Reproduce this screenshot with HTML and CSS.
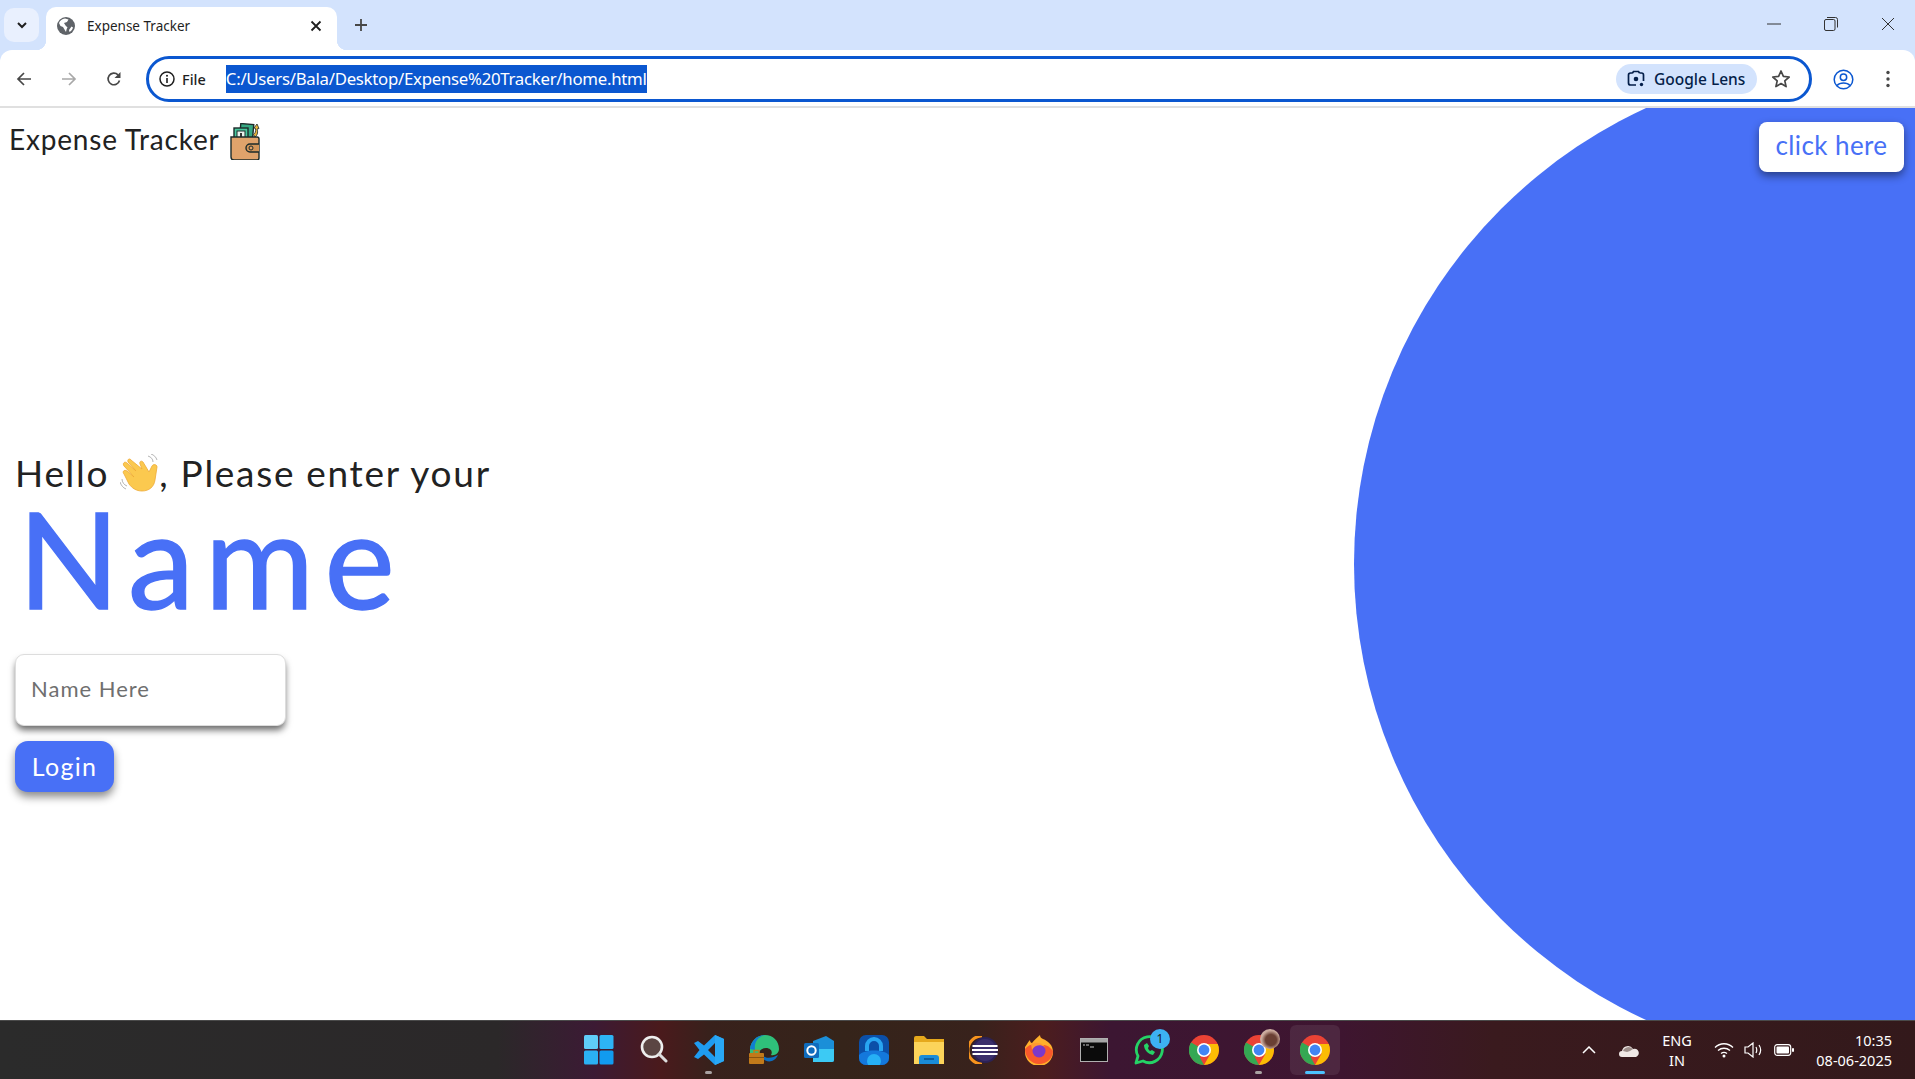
FILE: index.html
```html
<!DOCTYPE html>
<html lang="en">
<head>
<meta charset="utf-8">
<title>Expense Tracker</title>
<link rel="stylesheet" href="styles.css">
</head>
<body>
<div class="window">
  <div class="tabstrip">
    <div class="tabsearch"><svg width="14" height="14" viewBox="0 0 14 14"><path d="M3 5l4 4 4-4" fill="none" stroke="#1f1f1f" stroke-width="2"/></svg></div>
    <div class="tab">
      <svg class="favicon" width="18" height="18" viewBox="0 0 18 18"><circle cx="9" cy="9" r="9" fill="#5f6368"/><path d="M8 1.500C5 2 3 3.500 2 6l1.500 3L6 10l1.500 2.500L9 15c.5-2 .5-3 1.500-4.500L8.500 8.500 7 6l3-1 1.500-2.500zM12 13l2.500-3.500 1.500 1c-.5 2-2 3.500-3.500 4.500z" fill="#fff"/></svg>
      <span class="tabtitle">Expense Tracker</span>
      <svg class="tabclose" width="12" height="12" viewBox="0 0 12 12"><path d="M1.500 1.500l9 9M10.500 1.500l-9 9" stroke="#1f1f1f" stroke-width="1.800"/></svg>
    </div>
    <svg class="newtab" width="14" height="14" viewBox="0 0 14 14"><path d="M7 1v12M1 7h12" stroke="#474747" stroke-width="1.800"/></svg>
    <div class="wincontrols">
      <svg width="14" height="14" viewBox="0 0 14 14"><path d="M0 7h14" stroke="#333" stroke-width="1"/></svg>
      <svg width="14" height="14" viewBox="0 0 14 14"><rect x=".5" y="2.500" width="10.500" height="11" rx="1.500" fill="none" stroke="#333"/><path d="M3 .5H11.500a2 2 0 0 1 2 2v8" fill="none" stroke="#333"/></svg>
      <svg width="14" height="14" viewBox="0 0 14 14"><path d="M1 1l12 12M13 1L1 13" stroke="#333" stroke-width="1"/></svg>
    </div>
  </div>
  <div class="toolbar">
    <svg class="navicon" width="16" height="16" viewBox="0 0 16 16"><path d="M15 8H2M8 2 2 8l6 6" fill="none" stroke="#474747" stroke-width="1.700"/></svg>
    <svg class="navicon" width="16" height="16" viewBox="0 0 16 16"><path d="M1 8h13M8 2l6 6-6 6" fill="none" stroke="#a8a8a8" stroke-width="1.700"/></svg>
    <svg class="navicon" width="16" height="16" viewBox="0 0 16 16"><path d="M13.500 9.500A5.800 5.800 0 1 1 12 3.800" fill="none" stroke="#474747" stroke-width="1.700"/><path d="M14.500 1v6h-6z" fill="#474747"/></svg>
    <div class="omnibox">
      <svg class="infoicon" width="16" height="16" viewBox="0 0 16 16"><circle cx="8" cy="8" r="7" fill="none" stroke="#1f1f1f" stroke-width="1.500"/><path d="M8 7v5" stroke="#1f1f1f" stroke-width="1.600"/><circle cx="8" cy="4.700" r="1" fill="#1f1f1f"/></svg>
      <span class="filelabel">File</span>
      <span class="url">C:/Users/Bala/Desktop/Expense%20Tracker/home.html</span>
      <div class="lens">
        <svg width="18" height="18" viewBox="0 0 18 18"><path d="M5.500 3H3.500A2 2 0 0 0 1.500 5v8a2 2 0 0 0 2 2H9M12.500 3h2a2 2 0 0 1 2 2v6M5.500 3l1-1.500h5l1 1.500" fill="none" stroke="#041e49" stroke-width="1.700"/><circle cx="9" cy="9" r="2.300" fill="#041e49"/><circle cx="14.500" cy="14.500" r="1.700" fill="#041e49"/></svg>
        <span>Google Lens</span>
      </div>
      <svg class="star" width="20" height="20" viewBox="0 0 20 20"><path d="M10 2l2.400 5.400 5.800.6-4.400 3.900 1.300 5.700L10 14.600l-5.100 3 1.300-5.700L1.800 8l5.800-.6z" fill="none" stroke="#474747" stroke-width="1.700" stroke-linejoin="round"/></svg>
    </div>
    <svg class="profile" width="21" height="21" viewBox="0 0 21 21"><circle cx="10.500" cy="10.500" r="9.300" fill="none" stroke="#0b57d0" stroke-width="1.500"/><circle cx="10.500" cy="8.300" r="3.200" fill="none" stroke="#0b57d0" stroke-width="1.500"/><path d="M4 16.500c3-3.400 10-3.400 13 0" fill="none" stroke="#0b57d0" stroke-width="1.500"/></svg>
    <svg class="kebab" width="4" height="18" viewBox="0 0 4 18"><circle cx="2" cy="2.500" r="1.700" fill="#474747"/><circle cx="2" cy="9" r="1.700" fill="#474747"/><circle cx="2" cy="15.500" r="1.700" fill="#474747"/></svg>
  </div>
  <main class="page">
    <div class="circle"></div>
    <header class="pagehead">
      <div class="brand">
        <span class="brandtext">Expense Tracker</span>
        <svg width="33" height="37" viewBox="0 0 33 37"><rect x="11" y="1" width="13" height="18" fill="#35a882" stroke="#1c2b2a" stroke-width="1.400" transform="rotate(5 17 10)"/><rect x="5" y="5" width="14" height="17" fill="#48c79c" stroke="#1c2b2a" stroke-width="1.400"/><rect x="8" y="8" width="8" height="10" fill="#eaf2ec" stroke="#1c2b2a"/><path d="M11 10h2v6h-2z" fill="#333"/><path d="M26 14c3-2 3-6 2-8l2-.5L28 1l-3 4 1.500.5c.5 3-.5 5-2 6z" fill="#e8b23a" stroke="#1c2b2a" stroke-width=".8"/><path d="M2 14h26a2 2 0 0 1 2 2v19a2 2 0 0 1-2 2H5a3 3 0 0 1-3-3z" fill="#e0a36b" stroke="#1c2b2a" stroke-width="1.400"/><path d="M30 21H21a4 4 0 0 0 0 8h9" fill="#d39558" stroke="#1c2b2a" stroke-width="1.400"/><circle cx="22" cy="25" r="2" fill="#e0a36b" stroke="#1c2b2a"/></svg>
      </div>
      <button class="clickhere">click here</button>
    </header>
    <section class="login">
      <p class="hello">Hello <svg class="wave" width="41" height="38" viewBox="0 0 41 38"><path d="M11 6l11 9-2-5c-1-2 1-4 3-2l6 10 3-6c1-2 5-2 5 1l-2 13c-1 7-6 11-13 11-6 0-10-3-13-7L4 20c-2-2 0-5 3-3l7 6L4 12c-2-3 1-5 3-3l9 8L8 8c-1-3 2-4 3-2z" fill="#fbc94f" stroke="#eeaa36" stroke-width=".8"/><path d="M28 2c3 1 5 3 5 6M31 0c3 1 5 3 6 6M2 25c0 3 2 6 5 7M0 28c1 3 3 6 6 7" fill="none" stroke="#b5b5b5" stroke-width="1"/></svg>, Please enter your</p>
      <h1 class="name">Name</h1>
      <input class="nameinput" type="text" placeholder="Name Here">
      <button class="loginbtn">Login</button>
    </section>
  </main>
  <footer class="taskbar">
    <div class="taskicons">
      <div class="ticon"><svg width="30" height="30" viewBox="0 0 30 30"><rect x="0" y="0" width="14" height="14" rx="1.500" fill="#5fcdf8"/><rect x="15.500" y="0" width="14" height="14" rx="1.500" fill="#2db4f5"/><rect x="0" y="15.500" width="14" height="14" rx="1.500" fill="#2bb0f3"/><rect x="15.500" y="15.500" width="14" height="14" rx="1.500" fill="#119bf0"/></svg></div>
      <div class="ticon"><svg width="28" height="30" viewBox="0 0 28 30"><circle cx="12" cy="12" r="10" fill="#5b4543" stroke="#eee" stroke-width="2.600"/><path d="M19 19l7 7" stroke="#ddd" stroke-width="3" stroke-linecap="round"/></svg></div>
      <div class="ticon dot"><svg width="30" height="30" viewBox="0 0 30 30"><path d="M21 0l9 4v22l-9 4-11-10.500-6 4.500L0 22l5.500-7L0 8l4-2 6 4.500zM21 8l-7 7 7 7z" fill="#1f9cf0"/><path d="M21 0l9 4v22l-9 4z" fill="#29a8f5"/></svg></div>
      <div class="ticon"><svg width="30" height="30" viewBox="0 0 30 30"><path d="M1 14C2 5 9 0 16 0c8 0 14 6 14 14 0 4-4 7-8 6 2-3 0-7-5-7-6 0-8 5-7 9H1z" fill="#2fc07a"/><path d="M1 14C2 5 9 0 16 0 8 2 5 8 6 15z" fill="#0f7fd0"/><path d="M11 20c4 8 14 9 18 0-4 2-9 4-13 2z" fill="#0d6ec0"/><rect y="18" width="15" height="11" rx="1" fill="#c27a1a"/><rect x="5" y="15.500" width="5" height="3" fill="none" stroke="#c27a1a" stroke-width="1.500"/><rect y="22" width="15" height="1" fill="#8a5410"/></svg></div>
      <div class="ticon"><svg width="30" height="30" viewBox="0 0 30 30"><path d="M9 6l13-5 8 5v19a2 2 0 0 1-2 2H9z" fill="#1b8fd8"/><path d="M9 14h21v11a2 2 0 0 1-2 2H9z" fill="#3ccaf4"/><rect y="8" width="15" height="15" rx="1.500" fill="#0f6cbd"/><circle cx="7.500" cy="15.500" r="4.200" fill="none" stroke="#fff" stroke-width="2"/></svg></div>
      <div class="ticon"><svg width="30" height="30" viewBox="0 0 30 30"><rect width="30" height="30" rx="7" fill="#0b4fa8"/><path d="M8 16v-5a7 7 0 0 1 14 0v5" fill="none" stroke="#28a5f2" stroke-width="4"/><path d="M0 20c5-6 25-6 30 0v3a7 7 0 0 1-7 7H7a7 7 0 0 1-7-7z" fill="#1478dc"/><circle cx="15" cy="26" r="7" fill="#26b0f5"/></svg></div>
      <div class="ticon"><svg width="30" height="28" viewBox="0 0 30 28"><path d="M0 2a2 2 0 0 1 2-2h8l3 3h17v25H0z" fill="#e6a91c"/><path d="M0 6h30v22H0z" fill="#fcd45a"/><path d="M5 22a3 3 0 0 1 3-3h14a3 3 0 0 1 3 3v6H5z" fill="#1a8cd8"/><path d="M10 23h10" stroke="#0b4f8a" stroke-width="1.500"/></svg></div>
      <div class="ticon"><svg width="30" height="28" viewBox="0 0 30 28"><path d="M13 0a14 14 0 0 0 0 28" fill="none" stroke="#f7941e" stroke-width="3"/><circle cx="16" cy="14" r="13" fill="#2c2255"/><circle cx="16" cy="14" r="11" fill="#3a2f6b"/><path d="M3.500 10h25M3 14h26M3.500 18h25" stroke="#fff" stroke-width="2"/></svg></div>
      <div class="ticon"><svg width="30" height="30" viewBox="0 0 30 30"><path d="M1 12c2-3 3-5 5-7 0 2 1 3 2 3 2-3 5-5 8-8 0 2 1 3 3 4 5 2 10 6 10 13a14 14 0 0 1-28 0c0-2 0-4 0-5z" fill="#ffb02c"/><path d="M1 14c0 8 6 15 14 15s14-6 14-13c-3-4-6-6-9-6l-5 1-9-1-3 2z" fill="#f8592c"/><circle cx="15" cy="16" r="6.500" fill="#7b39c9"/><path d="M7 9c4-2 11-2 14 3-3-2-7-2-9-1-2 1-3 2-4 4z" fill="#ff9a30"/></svg></div>
      <div class="ticon"><svg width="28" height="24" viewBox="0 0 28 24"><rect x=".5" y=".5" width="27" height="23" fill="#0b0b0b" stroke="#b0b0b0"/><rect x="1" y="1" width="26" height="3.500" fill="#a6a6a6"/><path d="M3 7h2M6 7h3M10 9h4" stroke="#c8c8c8"/></svg></div>
      <div class="ticon"><svg width="30" height="30" viewBox="0 0 30 30"><path d="M2 28l2-7a13 13 0 1 1 5 5z" fill="none" stroke="#25d366" stroke-width="2.800" stroke-linejoin="round"/><path d="M10 10c0 5 4 9 9 10l2-3-3-2-2 1c-1-1-2-2-2-3l1-2-2-3z" fill="#25d366"/></svg><span class="badge">1</span></div>
      <div class="ticon"><svg class="chrome" width="30" height="30" viewBox="0 0 30 30"><use href="#chromeicon"/></svg></div>
      <div class="ticon dot"><svg class="chrome" width="30" height="30" viewBox="0 0 30 30"><use href="#chromeicon"/></svg><span class="avatar"></span></div>
      <div class="ticon active"><svg class="chrome" width="30" height="30" viewBox="0 0 30 30"><use href="#chromeicon"/></svg></div>
    </div>
    <div class="tray">
      <svg width="14" height="8" viewBox="0 0 14 8"><path d="M1 7l6-6 6 6" fill="none" stroke="#fff" stroke-width="1.500"/></svg>
      <svg class="cloud" width="20" height="13" viewBox="0 0 20 13"><path d="M3 13a3 3 0 0 1 0-6 6 6 0 0 1 11-2 4 4 0 0 1 3 8z" fill="#f0e9e6"/><path d="M4 7a6 6 0 0 1 10-2l-3 2-3 1z" fill="#9c8e8a"/></svg>
      <div class="lang"><span>ENG</span><span>IN</span></div>
      <div class="sysicons">
        <svg width="20" height="16" viewBox="0 0 20 16"><path d="M1 5.500c5-5 13-5 18 0M4 8.500c3.500-3 8.500-3 12 0M7 11.500c2-1.500 4-1.500 6 0" fill="none" stroke="#fff" stroke-width="1.300"/><circle cx="10" cy="14" r="1.500" fill="#fff"/></svg>
        <svg width="20" height="16" viewBox="0 0 20 16"><path d="M1 5h3l5-4v14l-5-4H1zM12 5c1 2 1 4 0 6M15 3c2 3 2 7 0 10" fill="none" stroke="#fff" stroke-width="1.200"/></svg>
        <svg width="20" height="12" viewBox="0 0 20 12"><rect x=".7" y=".7" width="16" height="10.600" rx="2.500" fill="none" stroke="#fff" stroke-width="1.200"/><rect x="2.500" y="2.500" width="12.500" height="7" rx="1" fill="#fff"/><rect x="18" y="4" width="2" height="4" rx="1" fill="#fff"/></svg>
      </div>
      <div class="clock"><span>10:35</span><span>08-06-2025</span></div>
    </div>
  </footer>
</div>
<svg class="defs" width="0" height="0"><defs><g id="chromeicon"><circle cx="15" cy="15" r="15" fill="#ea4335"/><path d="M15 15 8.500 26.300 1.900 22.500A15 15 0 0 1 2 7.500z" fill="#34a853"/><path d="M1.900 7.700 8.500 19l6.500-4z" fill="#34a853"/><path d="M15 9h13.700a15 15 0 0 1-13.700 21L21.500 18.800z" fill="#fbbc04"/><path d="M2 22.500 8.500 18l6.500 12a15 15 0 0 1-13-7.500z" fill="#34a853"/><circle cx="15" cy="15" r="7" fill="#fff"/><circle cx="15" cy="15" r="5.400" fill="#4285f4"/></g></defs></svg>
</body>
</html>
```
FILE: styles.css
```css
* { box-sizing: border-box; }
html, body { margin: 0; padding: 0; height: 100%; overflow: hidden; background: #d3e3fd; }
body { font-family: "Lato", "Noto Sans", sans-serif; }
.defs { display: block; height: 0; }
.window { width: 1915px; height: 1079px; display: flex; flex-direction: column; overflow: hidden; background: #d3e3fd; }

.tabstrip { height: 50px; flex: none; display: flex; align-items: flex-start; padding-left: 4px; }
.tabsearch { width: 35px; height: 34px; margin-top: 8px; border-radius: 10px; background: #e9f0fe; display: flex; align-items: center; justify-content: center; }
.tab { position: relative; width: 291px; height: 43px; margin: 7px 0 0 7px; background: #fff; border-radius: 10px 10px 0 0; display: flex; align-items: center; padding: 0 15px 6px 11px; font-family: "Noto Sans", sans-serif; font-size: 13.500px; color: #1f1f1f; }
.tab::before, .tab::after { content: ""; position: absolute; bottom: 0; width: 10px; height: 10px; }
.tab::before { left: -10px; background: radial-gradient(circle at 0 0, transparent 10px, #fff 10.500px); }
.tab::after { right: -10px; background: radial-gradient(circle at 100% 0, transparent 10px, #fff 10.500px); }
.tabtitle { margin-left: 12px; flex: 1; }
.newtab { margin: 18px 0 0 17px; }
.wincontrols { margin-left: auto; height: 50px; display: flex; align-items: center; gap: 43px; padding: 0 20px 2px 0; }

.toolbar { height: 58px; flex: none; background: #fff; border-bottom: 2px solid #e0e0e0; display: flex; align-items: center; padding: 2px 20px 0 16px; border-radius: 12px 12px 0 0; }
.navicon { margin-right: 29px; flex: none; }
.navicon:nth-of-type(3) { margin-right: 24px; }
.omnibox { width: 1666px; height: 46px; flex: none; border: 3px solid #0b57d0; border-radius: 23px; display: flex; align-items: center; padding: 0 18px 0 10px; font-family: "Noto Sans", sans-serif; }
.infoicon { flex: none; }
.filelabel { margin-left: 7px; font-size: 14.500px; font-weight: 500; color: #1f1f1f; }
.url { margin-left: 20px; background: #0b57d0; color: #fff; font-size: 16.800px; line-height: 28px; height: 28px; letter-spacing: -.27px; }
.lens { margin-left: auto; height: 30px; width: 141px; background: #d3e3fd; border-radius: 15px; display: flex; align-items: center; gap: 9px; padding-left: 11px; font-size: 15.500px; font-weight: 500; color: #041e49; }
.star { margin-left: 14px; }
.profile { margin-left: 21px; flex: none; }
.kebab { margin-left: 32px; flex: none; }

.page { flex: 1; position: relative; overflow: hidden; background: #fff; display: flex; flex-direction: column; color: #222; }
.circle { position: absolute; left: 1354px; top: -46px; width: 1004px; height: 1004px; border-radius: 50%; background: #4870f6; }
.pagehead { position: relative; display: flex; justify-content: space-between; align-items: flex-start; padding: 14px 11px 0 9px; }
.brand { display: flex; align-items: center; gap: 9px; font-size: 28px; letter-spacing: .8px; color: #222; }
.brandtext { padding-bottom: 5px; }
.clickhere { width: 145px; height: 50px; padding: 0 0 4px; border: 0; border-radius: 8px; background: #fff; color: #4870f6; font-family: inherit; font-size: 26px; letter-spacing: .4px; box-shadow: 0 4px 8px rgba(0,0,0,.45); }

.login { position: relative; width: 500px; padding-left: 15px; display: flex; flex-direction: column; align-items: flex-start; margin-top: 278px; }
.hello { margin: 0; font-size: 37px; line-height: 46px; letter-spacing: 1.700px; color: #222; display: flex; align-items: center; white-space: pre; }
.wave { margin-right: -2px; }
.name { margin: 0; padding-left: 3px; font-size: 133px; line-height: 124px; font-weight: 400; letter-spacing: 10.500px; color: #4870f6; -webkit-text-stroke: 1.500px #4870f6; }
.nameinput { width: 271px; height: 72px; margin-top: 34px; border: 1px solid #ddd; border-radius: 9px; padding: 0 15px 4px; font-family: inherit; font-size: 22px; letter-spacing: 1px; box-shadow: 0 5px 7px -1px rgba(0,0,0,.6); background: #fff; outline: 0; }
.nameinput::placeholder { color: #6f6f6f; opacity: 1; }
.loginbtn { width: 99px; height: 51px; margin-top: 15px; padding-bottom: 3px; border: 0; border-radius: 13px; background: #4870f6; color: #fff; font-family: inherit; font-size: 25px; letter-spacing: 1.300px; box-shadow: 0 5px 8px rgba(0,0,0,.45); }

.taskbar { height: 59px; flex: none; position: relative; display: flex; align-items: center; justify-content: flex-end; color: #fff; border-top: 1px solid #4a4a4a; background: linear-gradient(90deg, #2b2b2b 0, #2b2829 26%, #3c1a34 31%, #4a1a1c 34.500%, #38211c 37%, #35241a 44%, #38221c 51%, #4c1d1e 54.500%, #3c1632 58%, #3e1530 70%, #3a1a1e 78%, #33191b 100%); }
.taskicons { position: absolute; left: 571px; top: 0; height: 58px; display: flex; align-items: center; }
.ticon { position: relative; width: 55px; height: 50px; flex: none; display: flex; align-items: center; justify-content: center; }
.ticon.dot::after { content: ""; position: absolute; left: 24px; bottom: 1px; width: 7px; height: 3px; border-radius: 2px; background: #a9a2a2; }
.ticon.active { background: rgba(255,255,255,.08); border-radius: 6px; width: 50px; margin-left: 4px; }
.ticon.active::after { content: ""; position: absolute; left: 15px; bottom: 1px; width: 20px; height: 3px; border-radius: 2px; background: #4cc2ff; }
.badge { position: absolute; left: 29px; top: 4px; width: 20px; height: 20px; border-radius: 50%; background: #3db1f3; color: #1a1a1a; font: 12px/20px "Noto Sans", sans-serif; text-align: center; }
.avatar { position: absolute; left: 29px; top: 4px; width: 20px; height: 20px; border-radius: 50%; background: radial-gradient(circle at 55% 55%, #6a4034 0 35%, #c9a89a 60%, #d8c8c0); }

.tray { display: flex; align-items: center; height: 58px; padding-right: 23px; font-family: "Noto Sans", sans-serif; font-size: 14.500px; line-height: 20px; }
.cloud { margin-left: 23px; }
.lang { width: 30px; margin-left: 23px; display: flex; flex-direction: column; align-items: center; }
.sysicons { margin-left: 22px; display: flex; align-items: center; gap: 10px; }
.clock { width: 77px; margin-left: 21px; display: flex; flex-direction: column; align-items: flex-end; white-space: nowrap; }
```
